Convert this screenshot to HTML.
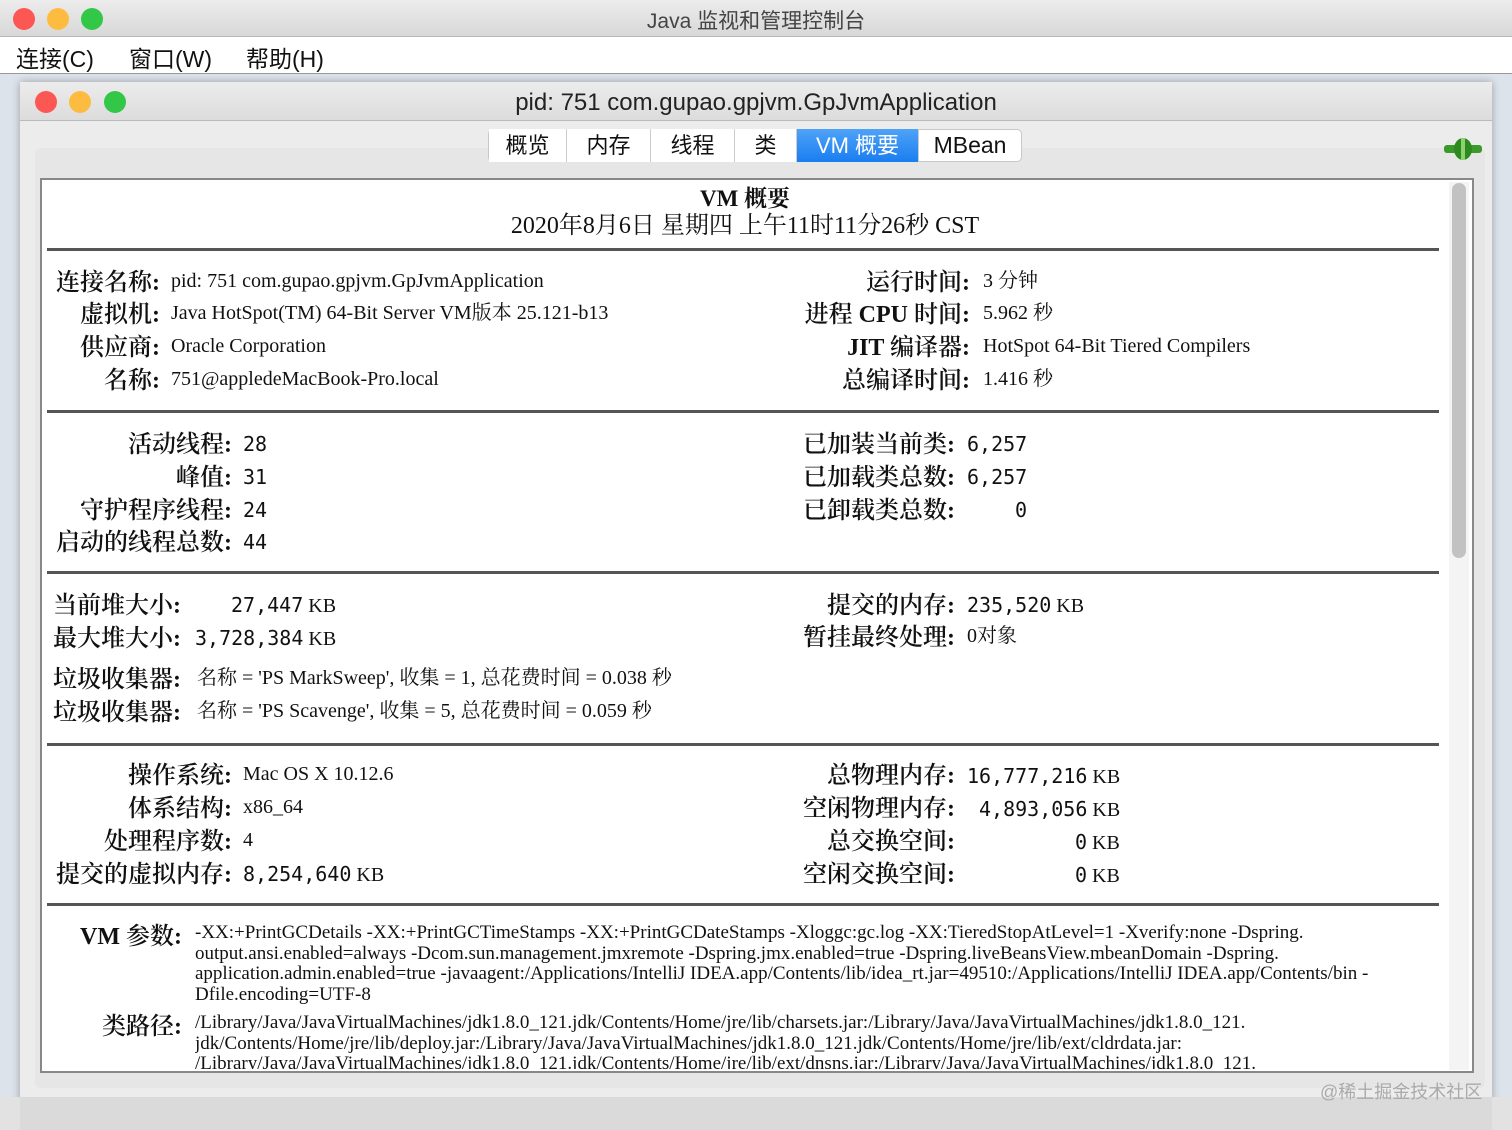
<!DOCTYPE html>
<html><head><meta charset="utf-8"><style>
*{margin:0;padding:0;box-sizing:border-box}
body{width:1512px;height:1130px;position:relative;overflow:hidden;background:#dde3ea;font-family:"Liberation Serif","Noto Serif CJK SC",serif;color:#111}
.a{position:absolute;white-space:nowrap}
.l{font-family:"Liberation Serif","Noto Serif CJK SC",serif;font-size:24px;line-height:26px;text-align:right;font-weight:600;margin-top:2px}
.v{font-size:20px;line-height:26px}
.m{font-family:"DejaVu Sans Mono",monospace;font-size:20px}
.hr{position:absolute;left:47px;width:1392px;height:3px;background:#555}
.dot{position:absolute;width:22px;height:22px;border-radius:50%}
.tab{position:absolute;top:129px;height:33px;font-family:"Liberation Sans","Noto Sans CJK SC",sans-serif;font-size:22px;line-height:33px;text-align:center;background:#fff;border-right:1px solid #ccc}
.p{font-size:19px;line-height:20.5px;white-space:normal}
</style></head><body>
<div class="a" style="left:0;top:0;width:1512px;height:37px;background:linear-gradient(#ececec,#d8d8d8);border-bottom:1px solid #b8b8b8"></div>
<div class="dot" style="left:13px;top:8px;background:#fc5753"></div>
<div class="dot" style="left:47px;top:8px;background:#fdbc40"></div>
<div class="dot" style="left:81px;top:8px;background:#33c748"></div>
<div class="a" style="left:0;width:1512px;top:5px;text-align:center;font-family:'Liberation Sans','Noto Sans CJK SC',sans-serif;font-size:21px;color:#444">Java 监视和管理控制台</div>
<div class="a" style="left:0;top:37px;width:1512px;height:37px;background:#fff;border-bottom:1px solid #999"></div>
<div class="a" style="left:16px;top:40px;font-family:'Liberation Sans','Noto Sans CJK SC',sans-serif;font-size:23px">连接(C)</div>
<div class="a" style="left:129px;top:40px;font-family:'Liberation Sans','Noto Sans CJK SC',sans-serif;font-size:23px">窗口(W)</div>
<div class="a" style="left:246px;top:40px;font-family:'Liberation Sans','Noto Sans CJK SC',sans-serif;font-size:23px">帮助(H)</div>

<div class="a" style="left:20px;top:82px;width:1472px;height:1048px;background:#ececec;box-shadow:0 0 8px rgba(0,0,0,.3)"></div>
<div class="a" style="left:20px;top:82px;width:1472px;height:39px;background:linear-gradient(#ececec,#dcdcdc);border-bottom:1px solid #bbb"></div>
<div class="dot" style="left:35px;top:91px;background:#fc5753"></div>
<div class="dot" style="left:69px;top:91px;background:#fdbc40"></div>
<div class="dot" style="left:104px;top:91px;background:#33c748"></div>
<div class="a" style="left:20px;width:1472px;top:89px;text-align:center;font-family:'Liberation Sans',sans-serif;font-size:24px;color:#222">pid: 751 com.gupao.gpjvm.GpJvmApplication</div>
<div class="a" style="left:35px;top:148px;width:1450px;height:940px;background:#e6e6e6;border-radius:6px"></div>
<div class="a" style="left:488px;top:129px;width:534px;height:33px;border:1px solid #c8c8c8;border-radius:5px;background:#fff"></div>
<div class="tab" style="left:489px;width:78px">概览</div>
<div class="tab" style="left:567px;width:84px">内存</div>
<div class="tab" style="left:651px;width:84px">线程</div>
<div class="tab" style="left:735px;width:62px">类</div>
<div class="tab" style="left:797px;width:122px;background:linear-gradient(#4fa3f7,#1a7df0);color:#fff">VM 概要</div>
<div class="tab" style="left:919px;width:102px;border:none;background:transparent;font-size:23px">MBean</div>
<svg class="a" style="left:1442px;top:136px" width="42" height="26"><rect x="2" y="9" width="38" height="8" rx="3" fill="#3a9a2a"/><ellipse cx="21" cy="13" rx="9" ry="11" fill="#2c8a1e"/><rect x="19" y="2" width="4" height="22" fill="#8fd070"/></svg>

<div class="a" style="left:40px;top:178px;width:1434px;height:895px;background:#fff;border:2px solid #888"></div>
<div class="a" style="left:1449px;top:182px;width:20px;height:888px;background:#f4f4f4"></div>
<div class="a" style="left:1452px;top:183px;width:14px;height:375px;background:#c2c2c2;border-radius:7px"></div>
<div class="a" style="left:0;top:1097px;width:1512px;height:33px;background:#e2e2e2"></div>
<div class="a" style="left:20px;top:1097px;width:1472px;height:33px;background:#dadada"></div>
<div class="a" style="left:1320px;top:1078px;font-family:'Liberation Sans','Noto Sans CJK SC',sans-serif;font-size:18px;color:#aaa">@稀土掘金技术社区</div>

<div class="a" style="left:40px;width:1410px;top:180px;text-align:center;font-size:23px;font-weight:bold">VM 概要</div>
<div class="a" style="left:40px;width:1410px;top:205px;text-align:center;font-size:24px">2020年8月6日 星期四 上午11时11分26秒 CST</div>
<div class="hr" style="top:248px"></div>
<div class="hr" style="top:410px"></div>
<div class="hr" style="top:571px"></div>
<div class="hr" style="top:743px"></div>
<div class="hr" style="top:903px"></div>

<!-- sec1 -->
<div class="a l" style="right:1352px;top:268px">连接名称:</div><div class="a v" style="left:171px;top:268px">pid: 751 com.gupao.gpjvm.GpJvmApplication</div>
<div class="a l" style="right:1352px;top:300px">虚拟机:</div><div class="a v" style="left:171px;top:300px">Java HotSpot(TM) 64-Bit Server VM版本 25.121-b13</div>
<div class="a l" style="right:1352px;top:333px">供应商:</div><div class="a v" style="left:171px;top:333px">Oracle Corporation</div>
<div class="a l" style="right:1352px;top:366px">名称:</div><div class="a v" style="left:171px;top:366px">751@appledeMacBook-Pro.local</div>
<div class="a l" style="right:542px;top:268px">运行时间:</div><div class="a v" style="left:983px;top:268px">3 分钟</div>
<div class="a l" style="right:542px;top:300px">进程 CPU 时间:</div><div class="a v" style="left:983px;top:300px">5.962 秒</div>
<div class="a l" style="right:542px;top:333px">JIT 编译器:</div><div class="a v" style="left:983px;top:333px">HotSpot 64-Bit Tiered Compilers</div>
<div class="a l" style="right:542px;top:366px">总编译时间:</div><div class="a v" style="left:983px;top:366px">1.416 秒</div>

<!-- sec2 -->
<div class="a l" style="right:1280px;top:430px">活动线程:</div><div class="a v m" style="left:243px;top:431px">28</div>
<div class="a l" style="right:1280px;top:463px">峰值:</div><div class="a v m" style="left:243px;top:464px">31</div>
<div class="a l" style="right:1280px;top:496px">守护程序线程:</div><div class="a v m" style="left:243px;top:497px">24</div>
<div class="a l" style="right:1280px;top:528px">启动的线程总数:</div><div class="a v m" style="left:243px;top:529px">44</div>
<div class="a l" style="right:557px;top:430px">已加装当前类:</div><div class="a v m" style="left:967px;top:431px">6,257</div>
<div class="a l" style="right:557px;top:463px">已加载类总数:</div><div class="a v m" style="left:967px;top:464px">6,257</div>
<div class="a l" style="right:557px;top:496px">已卸载类总数:</div><div class="a v m" style="left:1015px;top:497px">0</div>

<!-- sec3 -->
<div class="a l" style="left:53px;top:591px;text-align:left">当前堆大小:</div><div class="a v" style="left:231px;top:592px"><span class="m">27,447</span> KB</div>
<div class="a l" style="left:53px;top:624px;text-align:left">最大堆大小:</div><div class="a v" style="left:195px;top:625px"><span class="m">3,728,384</span> KB</div>
<div class="a l" style="left:53px;top:665px;text-align:left">垃圾收集器:</div><div class="a v" style="left:197px;top:665px">名称 = 'PS MarkSweep', 收集 = 1, 总花费时间 = 0.038 秒</div>
<div class="a l" style="left:53px;top:698px;text-align:left">垃圾收集器:</div><div class="a v" style="left:197px;top:698px">名称 = 'PS Scavenge', 收集 = 5, 总花费时间 = 0.059 秒</div>
<div class="a l" style="right:557px;top:591px">提交的内存:</div><div class="a v" style="left:967px;top:592px"><span class="m">235,520</span> KB</div>
<div class="a l" style="right:557px;top:623px">暂挂最终处理:</div><div class="a v" style="left:967px;top:623px">0对象</div>

<!-- sec4 -->
<div class="a l" style="right:1280px;top:761px">操作系统:</div><div class="a v" style="left:243px;top:761px">Mac OS X 10.12.6</div>
<div class="a l" style="right:1280px;top:794px">体系结构:</div><div class="a v" style="left:243px;top:794px">x86_64</div>
<div class="a l" style="right:1280px;top:827px">处理程序数:</div><div class="a v" style="left:243px;top:827px">4</div>
<div class="a l" style="right:1280px;top:860px">提交的虚拟内存:</div><div class="a v" style="left:243px;top:861px"><span class="m">8,254,640</span> KB</div>
<div class="a l" style="right:557px;top:761px">总物理内存:</div><div class="a v" style="left:967px;top:763px"><span class="m">16,777,216</span> KB</div>
<div class="a l" style="right:557px;top:794px">空闲物理内存:</div><div class="a v" style="left:979px;top:796px"><span class="m">4,893,056</span> KB</div>
<div class="a l" style="right:557px;top:827px">总交换空间:</div><div class="a v" style="left:1075px;top:829px"><span class="m">0</span> KB</div>
<div class="a l" style="right:557px;top:860px">空闲交换空间:</div><div class="a v" style="left:1075px;top:862px"><span class="m">0</span> KB</div>

<!-- sec5 -->
<div class="a l" style="right:1330px;top:922px">VM 参数:</div>
<div class="a p" style="left:195px;top:923px;width:1240px">-XX:+PrintGCDetails -XX:+PrintGCTimeStamps -XX:+PrintGCDateStamps -Xloggc:gc.log -XX:TieredStopAtLevel=1 -Xverify:none -Dspring.<br>output.ansi.enabled=always -Dcom.sun.management.jmxremote -Dspring.jmx.enabled=true -Dspring.liveBeansView.mbeanDomain -Dspring.<br>application.admin.enabled=true -javaagent:/Applications/IntelliJ IDEA.app/Contents/lib/idea_rt.jar=49510:/Applications/IntelliJ IDEA.app/Contents/bin -<br>Dfile.encoding=UTF-8</div>
<div class="a l" style="right:1330px;top:1012px">类路径:</div>
<div class="a p" style="left:195px;top:1013px;width:1240px;height:56px;overflow:hidden">/Library/Java/JavaVirtualMachines/jdk1.8.0_121.jdk/Contents/Home/jre/lib/charsets.jar:/Library/Java/JavaVirtualMachines/jdk1.8.0_121.<br>jdk/Contents/Home/jre/lib/deploy.jar:/Library/Java/JavaVirtualMachines/jdk1.8.0_121.jdk/Contents/Home/jre/lib/ext/cldrdata.jar:<br>/Library/Java/JavaVirtualMachines/jdk1.8.0_121.jdk/Contents/Home/jre/lib/ext/dnsns.jar:/Library/Java/JavaVirtualMachines/jdk1.8.0_121.</div>
</body></html>
